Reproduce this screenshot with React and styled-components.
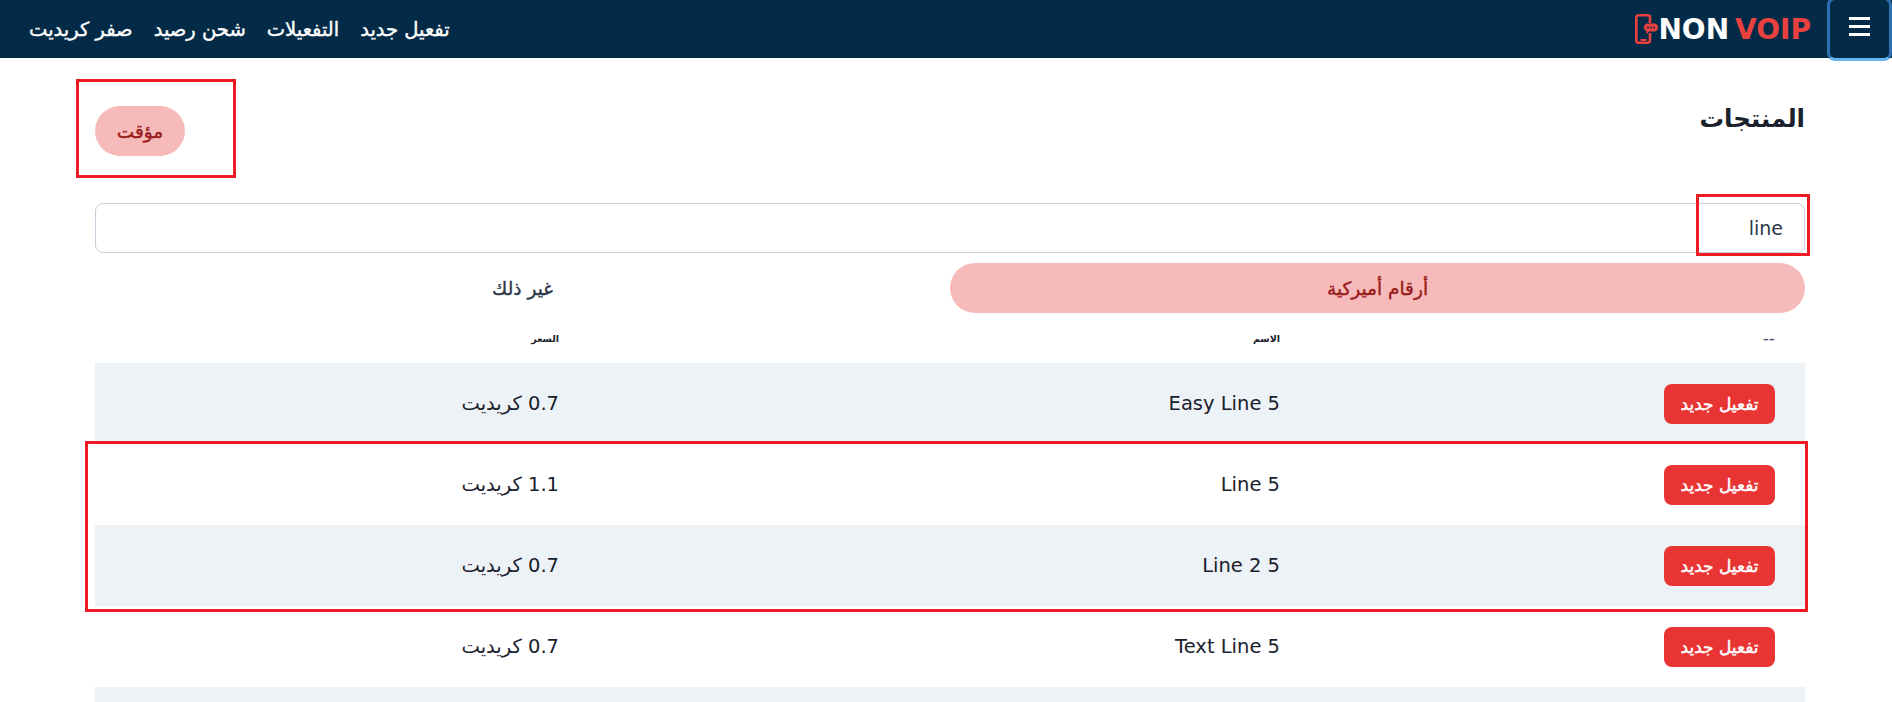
import React from 'react'
import styled, { createGlobalStyle } from 'styled-components'

const GlobalStyle = createGlobalStyle`
  html, body { margin: 0; padding: 0; background: #fff; }
  body { font-family: "DejaVu Sans", sans-serif; color: #1a202c; }
`

const Page = styled.div`
  height: 100vh;
  overflow: hidden;
  direction: rtl;
`

const Navbar = styled.nav`
  display: flex;
  align-items: center;
  height: 58px;
  background: #032b47;
`

const MenuButton = styled.button`
  flex: none;
  position: relative;
  z-index: 2;
  display: flex;
  flex-direction: column;
  align-items: center;
  justify-content: center;
  gap: 5px;
  width: 65px;
  height: 64px;
  margin: -3px 0 -3px 16px;
  padding: 0 0 6px;
  background: #032b47;
  border: 3px solid #2f6fb3;
  border-bottom-color: #63b3ed;
  border-radius: 8px;
  span {
    display: block;
    width: 21px;
    height: 3px;
    background: #fff;
  }
`

const Logo = styled.div`
  display: flex;
  align-items: center;
  gap: 6px;
  direction: ltr;
`

const LogoMark = styled.span`
  display: flex;
  margin-right: -6px;
`

const LogoText = styled.span`
  font-size: 28px;
  font-weight: 700;
  white-space: pre;
  color: ${p => (p.$red ? '#e94040' : '#fff')};
`

const NavLinks = styled.div`
  display: flex;
  gap: 21px;
  margin-right: auto;
  padding-left: 29px;
`

const NavLink = styled.a`
  font-size: 19.5px;
  color: #fff;
  white-space: nowrap;
  -webkit-text-stroke: 0.4px #fff;
`

const Content = styled.main`
  padding: 32px 87px 0 95px;
`

const Header = styled.div`
  display: flex;
  justify-content: space-between;
  align-items: flex-start;
  box-sizing: border-box;
  height: 113px;
  padding-top: 16px;
`

const Title = styled.h1`
  margin: -7px 0 0;
  font-size: 24.5px;
  font-weight: 700;
  line-height: 40px;
  color: #1a202c;
`

const Highlight = styled.div`
  position: absolute;
  top: ${p => p.$top}px;
  right: ${p => p.$right}px;
  bottom: ${p => p.$bottom}px;
  left: ${p => p.$left}px;
  border: 3px solid #ed1c24;
  pointer-events: none;
  z-index: 3;
`

const PillWrap = styled.div`
  position: relative;
`

const Pill = styled.div`
  display: flex;
  align-items: center;
  justify-content: center;
  height: 50px;
  width: ${p => (p.$wide ? '100%' : '90px')};
  border-radius: 25px;
  background: ${p => (p.$active ? '#f7baba' : 'transparent')};
  color: ${p => (p.$active ? '#991b1b' : '#2d3748')};
  font-size: 18.5px;
  -webkit-text-stroke: 0.4px currentColor;
`

const SearchWrap = styled.div`
  position: relative;
`

const SearchInput = styled.input`
  display: block;
  box-sizing: border-box;
  width: 100%;
  height: 50px;
  padding: 0 21px;
  background: #fff;
  border: 1px solid #c5d0dc;
  border-radius: 8px;
  color: #2d3748;
  font-family: "DejaVu Sans", sans-serif;
  font-size: 19px;
  outline: none;
`

const Tabs = styled.div`
  display: grid;
  grid-template-columns: 1fr 1fr;
  margin-top: 10px;
`

const Table = styled.div`
  position: relative;
`

const Row = styled.div`
  display: grid;
  grid-template-columns: 495px 721px 1fr;
  align-items: center;
  height: ${p => (p.$head ? '50px' : '81px')};
  background: ${p => (p.$shaded ? '#edf2f7' : 'transparent')};
`

const Cell = styled.div`
  padding-right: 30px;
  font-size: 19.5px;
  color: #1a202c;
`

const HeadCell = styled(Cell)`
  font-size: ${p => (p.$dash ? '17px' : '9.5px')};
  font-weight: ${p => (p.$dash ? 400 : 700)};
  color: ${p => (p.$dash ? '#4a5568' : '#1a202c')};
`

const ActivateButton = styled.button`
  display: block;
  width: 111px;
  height: 40px;
  padding: 0;
  background: #e93434;
  border: 0;
  border-radius: 8px;
  color: #fff;
  font-family: "DejaVu Sans", sans-serif;
  font-size: 17px;
  -webkit-text-stroke: 0.45px #fff;
`

const rows = [
  { name: 'Easy Line 5', price: '0.7 كريديت' },
  { name: 'Line 5', price: '1.1 كريديت' },
  { name: 'Line 2 5', price: '0.7 كريديت' },
  { name: 'Text Line 5', price: '0.7 كريديت' },
]

const PhoneLogo = () => (
  <svg width="23" height="30" viewBox="0 0 23 30" fill="none">
    <path d="M15 9V3.500A2.300 2.300 0 0 0 12.700 1.300H3.500A2.300 2.300 0 0 0 1.300 3.500v23a2.300 2.300 0 0 0 2.200 2.300h9.200A2.300 2.300 0 0 0 15 26.500V19" stroke="#e94040" strokeWidth="2.600" />
    <rect x="5.500" y="25" width="6" height="2" fill="#e94040" />
    <path d="M12.500 9.500h6.500a4 4 0 0 1 0 8h-5l-2.500 3v-3.300a4 4 0 0 1 1-7.700z" fill="#e94040" />
    <circle cx="13" cy="13.500" r="0.900" fill="#032b47" />
    <circle cx="16" cy="13.500" r="0.900" fill="#032b47" />
    <circle cx="19" cy="13.500" r="0.900" fill="#032b47" />
  </svg>
)

export default function App() {
  return (
    <Page>
      <GlobalStyle />
      <Navbar>
        <MenuButton>
          <span />
          <span />
          <span />
        </MenuButton>
        <Logo>
          <LogoMark><PhoneLogo /></LogoMark>
          <LogoText>NON</LogoText>
          <LogoText $red>VOIP</LogoText>
        </Logo>
        <NavLinks>
          <NavLink>تفعيل جديد</NavLink>
          <NavLink>التفعيلات</NavLink>
          <NavLink>شحن رصيد</NavLink>
          <NavLink>صفر كريديت</NavLink>
        </NavLinks>
      </Navbar>
      <Content>
        <Header>
          <Title>المنتجات</Title>
          <PillWrap>
            <Pill $active>مؤقت</Pill>
            <Highlight $top={-27} $right={-51} $bottom={-22} $left={-19} />
          </PillWrap>
        </Header>
        <SearchWrap>
          <SearchInput dir="rtl" defaultValue="line" />
          <Highlight $top={-9} $right={-5} $bottom={-3} $left={1601} />
        </SearchWrap>
        <Tabs>
          <Pill $wide $active>أرقام أميركية</Pill>
          <Pill $wide>غير ذلك</Pill>
        </Tabs>
        <Table>
          <Row $head>
            <HeadCell $dash>--</HeadCell>
            <HeadCell>الاسم</HeadCell>
            <HeadCell>السعر</HeadCell>
          </Row>
          {rows.map((row, i) => (
            <Row key={row.name} $shaded={i % 2 === 0}>
              <Cell><ActivateButton>تفعيل جديد</ActivateButton></Cell>
              <Cell>{row.name}</Cell>
              <Cell>{row.price}</Cell>
            </Row>
          ))}
          <Row $shaded />
          <Highlight $top={128} $right={-3} $bottom={156} $left={-10} />
        </Table>
      </Content>
    </Page>
  )
}
